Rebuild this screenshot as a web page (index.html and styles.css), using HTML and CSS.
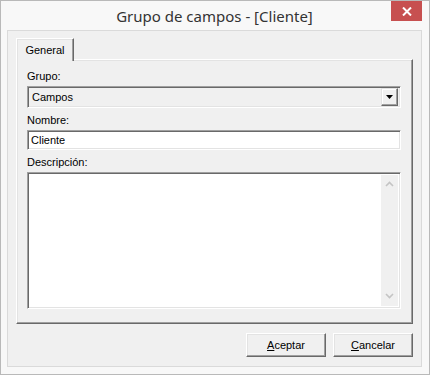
FILE: index.html
```html
<!DOCTYPE html>
<html lang="es">

<head>
    <meta charset="UTF-8">
    <meta name="viewport" content="width=device-width, initial-scale=1.0">
    <title>Grupo de campos - [Cliente]</title>
    <link rel="stylesheet" href="styles.css">
</head>

<body>
    <div class="window">
        <div class="titlebar">
            <div class="title-spacer"></div>
            <div class="title">Grupo de campos - [Cliente]</div>
            <div class="close-btn">
                <svg width="10" height="9" viewBox="0 0 10 9">
                    <path d="M1 0.5 L9 8.5 M9 0.5 L1 8.5" stroke="#fff" stroke-width="2" />
                </svg>
            </div>
        </div>

        <div class="client">
            <div class="tabs">
                <div class="tab active">General</div>
            </div>
            <div class="tab-panel">
                <div class="field-label">Grupo:</div>
                <div class="combo">
                    <span class="combo-text">Campos</span>
                    <span class="combo-btn">
                        <svg width="7" height="4" viewBox="0 0 7 4">
                            <path d="M0 0 H7 L3.5 4 Z" fill="#000" />
                        </svg>
                    </span>
                </div>

                <div class="field-label">Nombre:</div>
                <div class="text-input">Cliente</div>

                <div class="field-label">Descripción:</div>
                <div class="memo">
                    <div class="memo-text"></div>
                    <div class="scrollbar">
                        <svg width="9" height="6" viewBox="0 0 9 6">
                            <path d="M1 5 L4.5 1.5 L8 5" stroke="#c4c4c4" stroke-width="1.6" fill="none" />
                        </svg>
                        <svg width="9" height="6" viewBox="0 0 9 6">
                            <path d="M1 1 L4.5 4.5 L8 1" stroke="#c4c4c4" stroke-width="1.6" fill="none" />
                        </svg>
                    </div>
                </div>
            </div>

            <div class="buttons">
                <div class="btn"><u>A</u>ceptar</div>
                <div class="btn"><u>C</u>ancelar</div>
            </div>
        </div>
    </div>
</body>

</html>
```

FILE: styles.css
```css
body {
    margin: 0;
    background-color: #f8f8f8;
    font-family: "Liberation Sans", Arial, sans-serif;
    font-size: 11px;
    color: #000;
}

.window {
    width: 430px;
    height: 375px;
    box-sizing: border-box;
    border: 1px solid #b9b9b9;
    background-color: #f8f8f8;
    display: flex;
    flex-direction: column;
    padding: 0 7px 7px 6px;
}

/* barra de titulo */
.titlebar {
    height: 29px;
    display: flex;
    align-items: flex-start;
}

.title-spacer {
    width: 31px;
}

.title {
    flex: 1;
    text-align: center;
    font-family: "Noto Sans", "Open Sans", sans-serif;
    font-size: 15px;
    color: #333;
    line-height: 20px;
    padding-top: 5px;
}

.close-btn {
    width: 31px;
    height: 20px;
    background-color: #c75050;
    display: flex;
    align-items: center;
    justify-content: center;
}

.client {
    flex: 1;
    border: 1px solid #dadada;
    background-color: #f0f0f0;
    padding: 7px 8px 8px 8px;
    display: flex;
    flex-direction: column;
}

/* pestañas */
.tabs {
    display: flex;
    height: 21px;
    position: relative;
    z-index: 1;
}

.tab {
    width: 58px;
    box-sizing: border-box;
    text-align: center;
    padding-top: 5px;
    border-top: 1px solid #fff;
    border-left: 1px solid #fff;
    border-right: 1px solid #696969;
    box-shadow: inset -1px 0 #a0a0a0, inset 1px 1px #e3e3e3;
    background-color: #f0f0f0;
    height: 23px;
}

.tab-panel {
    height: 265px;
    box-sizing: border-box;
    border-top: 1px solid #fff;
    border-left: 1px solid #fff;
    border-right: 1px solid #696969;
    border-bottom: 1px solid #696969;
    box-shadow: inset -1px -1px #a0a0a0, inset 1px 1px #e3e3e3;
    padding: 10px 11px 0 10px;
    display: flex;
    flex-direction: column;
}

.field-label {
    line-height: 13px;
    height: 13px;
    margin-bottom: 3px;
}

.combo,
.text-input,
.memo {
    box-sizing: border-box;
    border-top: 1px solid #a0a0a0;
    border-left: 1px solid #a0a0a0;
    border-right: 1px solid #fff;
    border-bottom: 1px solid #fff;
    box-shadow: inset 1px 1px #696969, inset -1px -1px #e3e3e3;
}

.combo {
    height: 22px;
    background-color: #f0f0f0;
    display: flex;
    align-items: center;
    padding: 2px;
    margin-bottom: 6px;
}

.combo-text {
    flex: 1;
    padding-left: 2px;
}

.combo-btn {
    width: 17px;
    height: 18px;
    box-sizing: border-box;
    border-top: 1px solid #e3e3e3;
    border-left: 1px solid #e3e3e3;
    border-right: 1px solid #696969;
    border-bottom: 1px solid #696969;
    box-shadow: inset -1px -1px #a0a0a0, inset 1px 1px #fff;
    display: flex;
    align-items: center;
    justify-content: center;
}

.text-input {
    height: 20px;
    background-color: #fff;
    padding: 3px 3px 0 3px;
    line-height: 13px;
    margin-bottom: 6px;
}

.memo {
    height: 137px;
    background-color: #fff;
    display: flex;
    padding: 2px;
}

.memo-text {
    flex: 1;
}

.scrollbar {
    width: 17px;
    background-color: #f0f0f0;
    display: flex;
    flex-direction: column;
    align-items: center;
    justify-content: space-between;
    padding: 6px 0 7px 0;
}

/* botones */
.buttons {
    display: flex;
    justify-content: flex-end;
    gap: 7px;
    margin-top: 9px;
}

.btn {
    width: 80px;
    height: 24px;
    box-sizing: border-box;
    border-top: 1px solid #fff;
    border-left: 1px solid #fff;
    border-right: 1px solid #696969;
    border-bottom: 1px solid #696969;
    box-shadow: inset -1px -1px #a0a0a0, inset 1px 1px #e3e3e3;
    display: flex;
    align-items: center;
    justify-content: center;
}

.btn u {
    text-decoration: underline;
    text-underline-offset: 1px;
}
```
